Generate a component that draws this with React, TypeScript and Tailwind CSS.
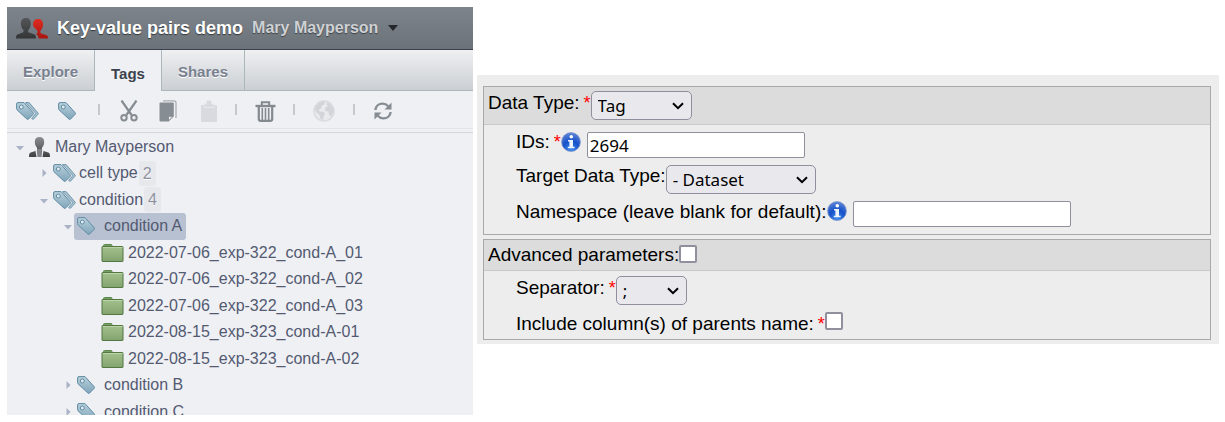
import { useState, type ReactNode } from "react";

function TagShape() {
  return (
    <>
      <path d="M.6 2Q.6.6 2 .6h6L17.4 11q.5.6 0 1.1l-5 5.1q-.7.6-1.3 0L1.1 7.9Q.6 7.4.6 6.6z" fill="url(#tagFill)" stroke="#5f8ba3" strokeWidth="1" />
      <circle cx="5.3" cy="5" r="2" fill="#dfe9ef" stroke="#5f8ba3" strokeWidth="1" />
    </>
  );
}

function TagIcon() {
  return (
    <svg width="18" height="18" viewBox="0 0 18 18" aria-hidden="true">
      <TagShape />
    </svg>
  );
}

function TagsIcon() {
  return (
    <svg width="23" height="18" viewBox="0 0 23 18" aria-hidden="true">
      <path d="M9.5.6h3.6L22 11q.6.6 0 1.2l-4.4 4.9q-.6.6-1.3 0l-.6-.8 3.7-4.2q.5-.6 0-1.1z" fill="#a9c3d1" stroke="#6f97ad" strokeWidth="1" />
      <TagShape />
    </svg>
  );
}

function PersonIcon() {
  return (
    <svg width="21" height="20" viewBox="0 0 21 20" aria-hidden="true">
      <path d="M10.5 0c3 0 4.700 1.900 4.700 4.900 0 2.800-1.200 4.600-2.200 5.800v2.800l6.300 2c1.200.5 1.700 1.500 1.700 4.500H0c0-3 .5-4 1.700-4.500L8 13.500v-2.800C7 9.500 5.800 7.700 5.800 4.900 5.800 1.900 7.500 0 10.500 0z" fill="url(#personFill)" />
      <path d="M6.500 14 8 13l.8 7H7.500zM14.500 14 13 13l-.8 7h1.300z" fill="#e9ebf0" />
      <path d="M8 12h5l-.8 8H8.800z" fill="#808387" />
    </svg>
  );
}

function FolderIcon() {
  return (
    <svg width="23" height="18" viewBox="0 0 23 18" aria-hidden="true">
      <path d="M2.500 3V1.500q0-1 1-1h6.500q1 0 1 1V3z" fill="#78a066" stroke="#5d8a4c" />
      <path d="M1.500 2.500h20q.500 0 .500.500v14q0 .500-.500.500h-20Q1 17.500 1 17V3q0-.500.500-.500z" fill="url(#folderFill)" stroke="#52773f" />
      <path d="M2 3.500h19.500" stroke="#bcd3a9" />
    </svg>
  );
}

function GroupIcon() {
  return (
    <svg width="32" height="21" viewBox="0 0 32 21" aria-hidden="true">
      <path d="M22 1c3.200 0 5 2 5 5.400 0 2.800-1.200 4.500-2.300 6.200-.8 1-.7 2.300.5 2.900l4.800 1.400c1.500.5 2 1.300 2 3.500h-9.500c0-2-.5-3.300-2.500-4.500 2-1 2-2.500.8-4C18.500 9.700 17 8.500 17 6.400 17 3 18.800 1 22 1z" fill="url(#redFill)" />
      <path d="M9.800 0c3.400 0 5 2 5 5.400 0 2.600-.8 4.600-2.100 6.200-.8 1-.7 2.400.3 3l5 1.700c1.500.5 2 1.400 2 4.200H0c0-2.800.5-3.700 2-4.200l4.800-1.700c1-.6 1.100-2 .3-3C5.800 10 4.900 8 4.900 5.400 4.900 2 6.600 0 9.800 0z" fill="url(#darkFill)" />
    </svg>
  );
}

function ScissorsIcon() {
  return (
    <svg width="18" height="22" viewBox="0 0 18 22" aria-hidden="true" fill="none" stroke="#858c92">
      <path d="M1.500.5 11.600 15M16.500.5 6.400 15" strokeWidth="2.200" />
      <circle cx="4" cy="17.700" r="2.700" strokeWidth="2" />
      <circle cx="14" cy="17.700" r="2.700" strokeWidth="2" />
    </svg>
  );
}

function CopyIcon() {
  return (
    <svg width="18" height="22" viewBox="0 0 18 22" aria-hidden="true">
      <path d="M4 .8h11q2 0 2 2V18" fill="none" stroke="#a8adb2" strokeWidth="1.300" />
      <path d="M1.500 2.500h12.300q1 0 1 1V16l-5.300 5.500h-8q-1 0-1-1v-17q0-1 1-1z" fill="#868d93" />
      <path d="M9.500 16.300h4.800l-4.800 4.700z" fill="#eff0f4" stroke="#868d93" />
    </svg>
  );
}

function ClipboardIcon() {
  return (
    <svg width="16" height="22" viewBox="0 0 16 22" aria-hidden="true" fill="#d8dadf">
      <path d="M1 5h14q1 0 1 1v15q0 1-1 1H1q-1 0-1-1V6q0-1 1-1z" />
      <path d="M3 7.500V4h2.500V1.500q0-1 1-1h3q1 0 1 1V4H13v3.500z" stroke="#e6e8ec" />
    </svg>
  );
}

function TrashIcon() {
  return (
    <svg width="21" height="21" viewBox="0 0 21 21" aria-hidden="true" fill="none" stroke="#838a90">
      <path d="M6.800 4V1.200h7.400V4" strokeWidth="2" />
      <path d="M.5 5h20" strokeWidth="2.400" />
      <path d="M3.800 6v12q0 1.800 1.800 1.800h9.800q1.800 0 1.800-1.800V6" strokeWidth="2.200" />
      <path d="M7.300 7v12M10.500 7v12M13.700 7v12" strokeWidth="1.600" />
    </svg>
  );
}

function GlobeIcon() {
  return (
    <svg width="22" height="22" viewBox="0 0 22 22" aria-hidden="true">
      <circle cx="11" cy="11" r="10" fill="#e9eaee" stroke="#d8dade" strokeWidth="1.500" />
      <path d="M2 8 5 4l4-2.500 3 .5-1 2.500L8.500 6 8 8.500 5.500 10l1.500 1.500 3.500.5 1.500 2-1.500 2.500L10 20l-2.500-1-1-4L3 12zM14 2.500l3 1.500 3 4 .5 4-2.500 4.500-2-1.500-.5-3.500-3-.5-.5-3 3-2-1.500-1.500z" fill="#d2d4d9" />
    </svg>
  );
}

function RefreshIcon() {
  return (
    <svg width="18" height="18" viewBox="0 0 18 18" aria-hidden="true" fill="none" stroke="#858c92">
      <path d="M1.400 8C1.700 4 4.800 1.600 8.600 1.600c2.500 0 4.200 1 5.600 2.600M16.600 10c-.3 4-3.400 6.400-7.200 6.400-2.500 0-4.200-1-5.600-2.600" strokeWidth="2.400" />
      <path d="M17.500.5v7h-7zM.5 17.500v-7h7z" fill="#858c92" stroke="none" />
    </svg>
  );
}

function InfoIcon() {
  return (
    <svg className="shrink-0" width="20" height="20" viewBox="0 0 20 20" role="img" aria-label="Help">
      <circle cx="10" cy="10" r="9.400" fill="url(#infoFill)" stroke="#7f93c8" strokeWidth=".8" />
      <circle cx="10.300" cy="4.800" r="1.800" fill="#fff" />
      <path d="M7 8h5v6.700h1.600v1.500H6.800v-1.500h1.600V9.500H7z" fill="#eef4ff" />
    </svg>
  );
}

function Gradients() {
  return (
    <svg width="0" height="0" className="absolute" aria-hidden="true">
      <defs>
        <linearGradient id="tagFill" x1="0" y1="0" x2="0" y2="1">
          <stop offset="0" stopColor="#b9d0dc" />
          <stop offset="1" stopColor="#7fa5ba" />
        </linearGradient>
        <linearGradient id="personFill" x1="0" y1="0" x2="0" y2="1">
          <stop offset="0" stopColor="#8b8d90" />
          <stop offset="1" stopColor="#3e4042" />
        </linearGradient>
        <linearGradient id="folderFill" x1="0" y1="0" x2="0" y2="1">
          <stop offset="0" stopColor="#a3c18d" />
          <stop offset="1" stopColor="#82a36f" />
        </linearGradient>
        <linearGradient id="redFill" x1="0" y1="0" x2="0" y2="1">
          <stop offset="0" stopColor="#e02b22" />
          <stop offset="1" stopColor="#a8150f" />
        </linearGradient>
        <linearGradient id="darkFill" x1="0" y1="0" x2="0" y2="1">
          <stop offset="0" stopColor="#555658" />
          <stop offset="1" stopColor="#333435" />
        </linearGradient>
        <radialGradient id="infoFill" cx=".5" cy=".9" r=".9">
          <stop offset="0" stopColor="#3f8df0" />
          <stop offset=".5" stopColor="#1650c8" />
          <stop offset="1" stopColor="#5f86d8" />
        </radialGradient>
      </defs>
    </svg>
  );
}

type Kind = "user" | "tagset" | "tag" | "dataset";
type Node = { label: string; kind: Kind; state?: "open" | "closed"; count?: number; selected?: boolean };

const nodes: Node[] = [
  { label: "Mary Mayperson", kind: "user", state: "open" },
  { label: "cell type", kind: "tagset", state: "closed", count: 2 },
  { label: "condition", kind: "tagset", state: "open", count: 4 },
  { label: "condition A", kind: "tag", state: "open", selected: true },
  { label: "2022-07-06_exp-322_cond-A_01", kind: "dataset" },
  { label: "2022-07-06_exp-322_cond-A_02", kind: "dataset" },
  { label: "2022-07-06_exp-322_cond-A_03", kind: "dataset" },
  { label: "2022-08-15_exp-323_cond-A-01", kind: "dataset" },
  { label: "2022-08-15_exp-323_cond-A-02", kind: "dataset" },
  { label: "condition B", kind: "tag", state: "closed" },
  { label: "condition C", kind: "tag", state: "closed" },
];

const kinds: Record<Kind, { level: number; indent: string; gap: string; icon: ReactNode }> = {
  user: { level: 1, indent: "pl-[9px]", gap: "gap-[5px]", icon: <PersonIcon /> },
  tagset: { level: 2, indent: "pl-[33px]", gap: "gap-[3px]", icon: <TagsIcon /> },
  tag: { level: 3, indent: "pl-[57px]", gap: "gap-[9px]", icon: <TagIcon /> },
  dataset: { level: 4, indent: "pl-[81px]", gap: "gap-[4px]", icon: <FolderIcon /> },
};

function TreeRow({ node }: { node: Node }) {
  const kind = kinds[node.kind];
  return (
    <li
      role="treeitem"
      aria-level={kind.level}
      aria-expanded={node.state ? node.state === "open" : undefined}
      aria-selected={!!node.selected}
      className={`flex shrink-0 items-center odd:h-[27px] even:h-[26px] ${kind.indent}`}
    >
      <svg className="mr-[2px] shrink-0" width="8" height="8" viewBox="0 0 8 8" aria-hidden="true" fill="#aab2c6">
        {node.state === "open" && <path d="M0 3h8L4 7.500z" />}
        {node.state === "closed" && <path d="M2.500 0 6.500 4l-4 4z" />}
      </svg>
      <button
        type="button"
        className={`flex h-[27px] items-center rounded-[3px] pl-[3px] whitespace-nowrap ${kind.gap} ${node.selected ? "bg-[#b8c1d1] pr-1" : ""}`}
      >
        {kind.icon}
        {node.label}
      </button>
      {node.count !== undefined && (
        <span className="ml-px rounded-[3px] bg-[#e7e8ec] px-1 leading-[25px] text-[#8d929e]">{node.count}</span>
      )}
    </li>
  );
}

function Separator() {
  return <span className="mb-1 h-[11px] w-[2px] self-center justify-self-center bg-[#c5c9ce]" />;
}

function ToolButton({ label, disabled, children }: { label: string; disabled?: boolean; children: ReactNode }) {
  return (
    <button type="button" aria-label={label} disabled={disabled} className="flex items-center justify-center">
      {children}
    </button>
  );
}

function Explorer() {
  const [tab, setTab] = useState("Tags");
  return (
    <section className="flex min-h-0 min-w-0 flex-col overflow-hidden bg-[#eff0f4]">
      <header className="flex h-[43px] shrink-0 items-center border-b border-[#3a414c] bg-linear-to-b from-[#7e848c] to-[#6b7278] pl-[9px] font-bold whitespace-nowrap">
        <GroupIcon />
        <h1 className="ml-[9px] text-[18px] text-white [text-shadow:0_1px_1px_#33383d]">Key-value pairs demo</h1>
        <button type="button" className="ml-[9px] flex items-center gap-[10px] text-[16px] text-[#cfd1d4] [text-shadow:0_1px_1px_#3d4247]">
          Mary Mayperson
          <svg width="10" height="6" viewBox="0 0 10 6" aria-hidden="true">
            <path d="M0 0h10L5 6z" fill="#24272b" />
          </svg>
        </button>
      </header>
      <nav role="tablist" className="flex h-[41px] shrink-0 border-b border-[#abb7bb] bg-linear-to-b from-[#eff0f2] to-[#cbcfd3] text-[15px] font-bold">
        {["Explore", "Tags", "Shares"].map((name) => (
          <button
            key={name}
            type="button"
            role="tab"
            aria-selected={tab === name}
            onClick={() => setTab(name)}
            className={`border-r border-[#abb7bb] px-4 ${tab === name ? "-mb-px bg-[#eff0f4] pt-[7px] text-[#3c424c]" : "pt-1 text-[#78808f] [text-shadow:0_1px_0_#fff]"}`}
          >
            {name}
          </button>
        ))}
      </nav>
      <div
        role="toolbar"
        aria-label="Tag actions"
        className="grid h-[38px] shrink-0 grid-cols-[40px_40px_23px_37px_42px_39px_15px_45px_12px_48px_11px_47px] border-b border-[#e1e4e8] pt-[3px]"
      >
        <ToolButton label="New tag set"><TagsIcon /></ToolButton>
        <ToolButton label="New tag"><TagIcon /></ToolButton>
        <Separator />
        <ToolButton label="Cut"><ScissorsIcon /></ToolButton>
        <ToolButton label="Copy"><CopyIcon /></ToolButton>
        <ToolButton label="Paste" disabled><ClipboardIcon /></ToolButton>
        <Separator />
        <ToolButton label="Delete"><TrashIcon /></ToolButton>
        <Separator />
        <ToolButton label="Share" disabled><GlobeIcon /></ToolButton>
        <Separator />
        <ToolButton label="Refresh"><RefreshIcon /></ToolButton>
      </div>
      <ul
        role="tree"
        aria-label="Tags"
        className="mt-[3px] flex min-h-0 flex-1 flex-col overflow-hidden border-t border-[#d3d7dc] text-[16px] text-[#535a71] [text-shadow:0_1px_0_#fff]"
      >
        {nodes.map((node) => (
          <TreeRow key={node.label} node={node} />
        ))}
      </ul>
    </section>
  );
}

function Required() {
  return <span className="pl-1 text-[18px] text-[#ff0000]">*</span>;
}

function Select({ id, width, options }: { id: string; width: string; options: string[] }) {
  return (
    <span className={`grid h-[29px] items-center ${width}`}>
      <select
        id={id}
        className="col-start-1 row-start-1 h-full w-full appearance-none rounded-[5px] border border-[#8f8f9d] bg-[#e9e9ed] pl-[6px] font-['Noto_Sans',sans-serif] text-[17px]"
      >
        {options.map((option) => (
          <option key={option}>{option}</option>
        ))}
      </select>
      <svg
        className="pointer-events-none col-start-1 row-start-1 mr-[8px] justify-self-end"
        width="12"
        height="8"
        viewBox="0 0 12 8"
        aria-hidden="true"
      >
        <path d="M1 1.200 6 6.200l5-5" fill="none" stroke="#000" strokeWidth="2" />
      </svg>
    </span>
  );
}

const inputClass =
  "ml-[6px] h-[26px] w-[218px] min-w-0 rounded-[2px] border border-[#8f8f9d] bg-white px-[2px] font-['Noto_Sans',sans-serif] text-[17px]";
const checkClass = "h-[18px] w-[18px] shrink-0 appearance-none rounded-[2px] border-2 border-[#8f8f9d] bg-white checked:bg-[#0060df]";

function ScriptForm() {
  return (
    <form className="mt-[68px] flex min-w-0 flex-col gap-1 self-start bg-[#ededed] pt-[11px] pr-2 pb-1 pl-[6px] text-[19px] whitespace-nowrap text-black">
      <div className="border border-[#a9a9a9]">
        <div className="flex h-[38px] items-start border-b border-[#c9c9c9] bg-[#dcdcdc] pt-1 pl-1">
          <label htmlFor="data-type" className="leading-6">Data Type:<Required /></label>
          <Select id="data-type" width="w-[101px]" options={["Tag", "Dataset", "Project"]} />
        </div>
        <div className="flex flex-col gap-[7px] py-[7px] pl-8">
          <div className="flex items-start">
            <label htmlFor="ids" className="leading-5">IDs:<Required /></label>
            <InfoIcon />
            <input id="ids" type="text" defaultValue="2694" className={inputClass} />
          </div>
          <div className="flex items-start">
            <label htmlFor="target" className="leading-[22px]">Target Data Type:</label>
            <Select id="target" width="w-[150px]" options={["- Dataset", "- Project", "- Image"]} />
          </div>
          <div className="flex items-start">
            <label htmlFor="namespace" className="leading-[22px]">Namespace (leave blank for default):</label>
            <InfoIcon />
            <input id="namespace" type="text" className={inputClass} />
          </div>
        </div>
      </div>
      <div className="border border-[#a9a9a9]">
        <div className="flex items-start border-b border-[#c9c9c9] bg-[#dcdcdc] py-[5px] pl-1">
          <label htmlFor="advanced" className="leading-5">Advanced parameters:</label>
          <input id="advanced" type="checkbox" className={checkClass} />
        </div>
        <div className="flex flex-col gap-[7px] pt-[5px] pb-[3px] pl-8">
          <div className="flex items-start">
            <label htmlFor="separator" className="leading-6">Separator:<Required /></label>
            <Select id="separator" width="w-[71px]" options={[";", ",", "TAB"]} />
          </div>
          <div className="flex items-start">
            <label htmlFor="parents" className="leading-6">Include column(s) of parents name:<Required /></label>
            <input id="parents" type="checkbox" className={checkClass} />
          </div>
        </div>
      </div>
    </form>
  );
}

export default function App() {
  return (
    <main className="grid h-screen grid-cols-[466fr_742fr] grid-rows-[minmax(0,1fr)] gap-1 bg-white py-[7px] pr-[6px] pl-[7px] font-['Liberation_Sans',Arial,sans-serif]">
      <Gradients />
      <Explorer />
      <ScriptForm />
    </main>
  );
}
